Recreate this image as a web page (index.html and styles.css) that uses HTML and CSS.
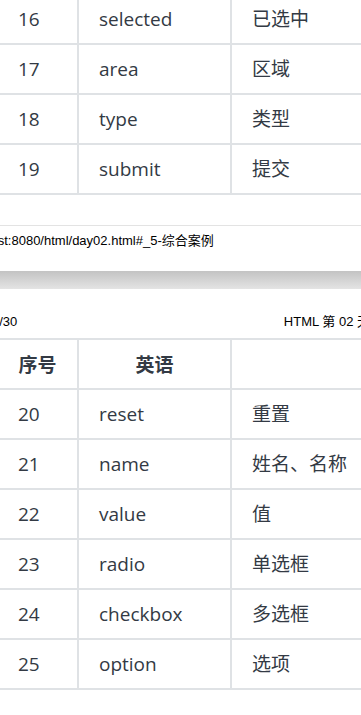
FILE: index.html
```html
<!DOCTYPE html>
<html lang="zh-CN">
<head>
    <meta charset="UTF-8">
    <meta name="viewport" content="width=device-width, initial-scale=1.0">
    <title>HTML 第 02 天</title>
    <link rel="stylesheet" href="styles.css">
</head>
<body>
    <div class="sheet sheet-top">
        <table class="words">
            <colgroup>
                <col class="col-num">
                <col class="col-en">
                <col class="col-zh">
            </colgroup>
            <tbody>
                <tr><td>16</td><td>selected</td><td>已选中</td></tr>
                <tr><td>17</td><td>area</td><td>区域</td></tr>
                <tr><td>18</td><td>type</td><td>类型</td></tr>
                <tr><td>19</td><td>submit</td><td>提交</td></tr>
            </tbody>
        </table>
        <div class="page-foot">
            <span class="url">http://localhost:8080/html/day02.html#_5-综合案例</span>
        </div>
    </div>

    <div class="page-gap"></div>

    <div class="sheet">
        <div class="page-head">
            <span class="page-no">2/30</span>
            <span class="page-title">HTML 第 02 天</span>
        </div>
        <table class="words">
            <colgroup>
                <col class="col-num">
                <col class="col-en">
                <col class="col-zh">
            </colgroup>
            <thead>
                <tr><th>序号</th><th>英语</th><th>中文</th></tr>
            </thead>
            <tbody>
                <tr><td>20</td><td>reset</td><td>重置</td></tr>
                <tr><td>21</td><td>name</td><td>姓名、名称</td></tr>
                <tr><td>22</td><td>value</td><td>值</td></tr>
                <tr><td>23</td><td>radio</td><td>单选框</td></tr>
                <tr><td>24</td><td>checkbox</td><td>多选框</td></tr>
                <tr><td>25</td><td>option</td><td>选项</td></tr>
            </tbody>
        </table>
    </div>
</body>
</html>
```

FILE: styles.css
```css
body {
    margin: 0;
    background-color: #fff;
    overflow: hidden;
    font-family: 'Open Sans', 'Noto Sans CJK SC', sans-serif;
}

.sheet {
    background-color: #fff;
}

.sheet-top {
    margin-top: -7px;
}

/* word table */
.words {
    border-collapse: collapse;
    table-layout: fixed;
    width: 400px;
    margin-left: -4px;
    color: #333a44;
    font-size: 19px;
}

.col-num {
    width: 81px;
}

.col-en {
    width: 153px;
}

.col-zh {
    width: 166px;
}

.words td,
.words th {
    border: 2px solid #dfe2e5;
    padding: 0 20px;
    line-height: 48px;
    text-align: left;
    white-space: nowrap;
}

.words th {
    font-weight: bold;
    text-align: center;
    font-family: 'Noto Sans CJK SC', sans-serif;
}

.words th:last-child {
    color: transparent;
}

/* print page header / footer */
.page-foot {
    margin-top: 30px;
    border-top: 1px solid #e3e3e3;
    height: 46px;
    padding-top: 7px;
    box-sizing: border-box;
    font-family: 'Liberation Sans', 'Noto Sans CJK SC', sans-serif;
    font-size: 13px;
    line-height: 16px;
    color: #000;
    white-space: nowrap;
}

.url {
    display: inline-block;
    margin-left: -76px;
}

.page-gap {
    height: 18px;
    background: linear-gradient(#c3c3c3, #e4e4e4);
}

.page-head {
    display: flex;
    justify-content: space-between;
    width: 370px;
    padding-top: 25px;
    margin-bottom: 8px;
    font-family: 'Liberation Sans', 'Noto Sans CJK SC', sans-serif;
    font-size: 13px;
    line-height: 16px;
    color: #000;
    white-space: nowrap;
}

.page-no {
    margin-left: -8px;
}
```
